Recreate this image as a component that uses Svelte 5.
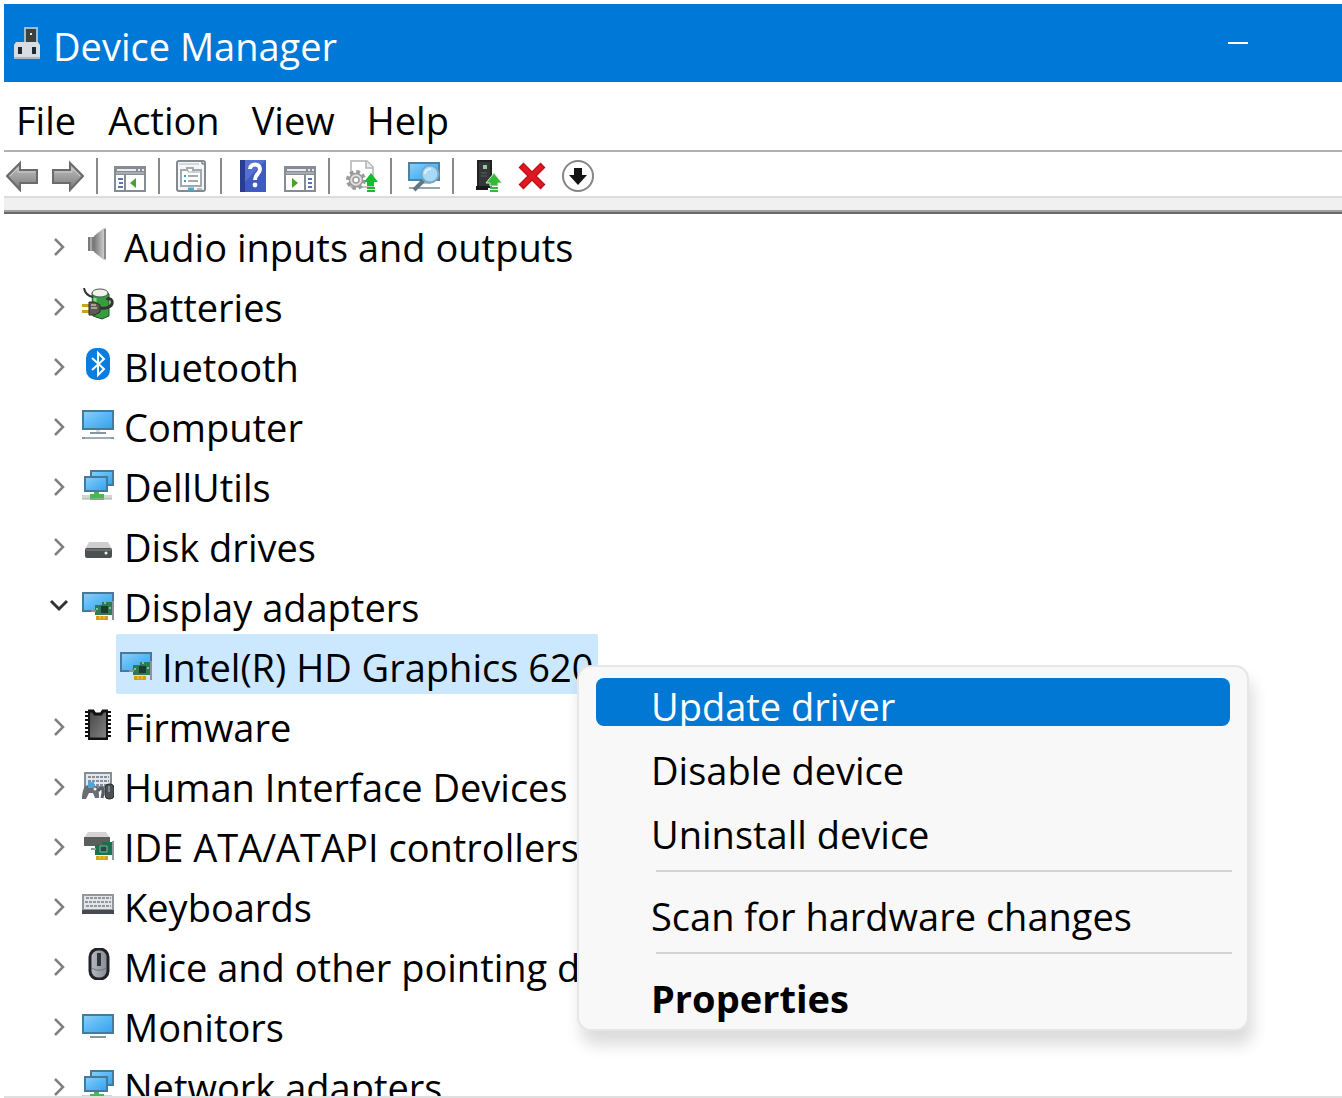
<script lang="ts">
  interface Device {
    label: string;
    icon: string;
    children?: Device[];
  }

  const menus = ["File", "Action", "View", "Help"];

  const tools = [
    { icon: "back", label: "Back" },
    { icon: "forward", label: "Forward" },
    null,
    { icon: "tree-pane", label: "Show/Hide Console Tree" },
    null,
    { icon: "properties", label: "Properties" },
    null,
    { icon: "help", label: "Help" },
    { icon: "action-pane", label: "Show/Hide Action Pane" },
    null,
    { icon: "update", label: "Update driver" },
    null,
    { icon: "scan", label: "Scan for hardware changes" },
    null,
    { icon: "enable", label: "Enable device" },
    { icon: "uninstall", label: "Uninstall device" },
    { icon: "disable", label: "Disable device" },
  ];

  const devices: Device[] = [
    { label: "Audio inputs and outputs", icon: "audio" },
    { label: "Batteries", icon: "battery" },
    { label: "Bluetooth", icon: "bluetooth" },
    { label: "Computer", icon: "computer" },
    { label: "DellUtils", icon: "network" },
    { label: "Disk drives", icon: "disk" },
    {
      label: "Display adapters",
      icon: "display",
      children: [{ label: "Intel(R) HD Graphics 620", icon: "display" }],
    },
    { label: "Firmware", icon: "firmware" },
    { label: "Human Interface Devices", icon: "hid" },
    { label: "IDE ATA/ATAPI controllers", icon: "ide" },
    { label: "Keyboards", icon: "keyboard" },
    { label: "Mice and other pointing devices", icon: "mouse" },
    { label: "Monitors", icon: "monitor" },
    { label: "Network adapters", icon: "network" },
  ];

  const contextMenu = [
    "Update driver",
    "Disable device",
    "Uninstall device",
    null,
    "Scan for hardware changes",
    null,
    "Properties",
  ];

  let expanded: Record<string, boolean> = $state({ "Display adapters": true });
  let active = $state("Update driver");

  function toggle(label: string) {
    expanded[label] = !expanded[label];
  }
</script>

{#snippet icon(name: string)}
  <svg class="icon" viewBox="0 0 32 32" aria-hidden="true">
    {#if name === "back"}
      <path d="M1 16 14 3V10H31V23H14V30Z" fill="url(#arrow)" stroke="#6b6b6b" stroke-width="2" />
      <path d="M4 16 12 8V12H29" fill="none" stroke="#ccc" />
    {:else if name === "forward"}
      <path d="M31 16 18 3V10H1V23H18V30Z" fill="url(#arrow)" stroke="#6b6b6b" stroke-width="2" />
      <path d="M28 16 20 8V12H3" fill="none" stroke="#ccc" />
    {:else if name === "tree-pane" || name === "action-pane"}
      <path d="M1 7H31V31H1Z" fill="#fff" stroke="#868c93" stroke-width="2" />
      <path d="M1 7H31V15H1Z" fill="#868c93" />
      <path d="M3 10H22M24 10H26M28 10H30" stroke="#e8ecef" stroke-width="2" />
      <path d="M2 13H30" stroke="#c9cdd1" stroke-width="1" />
      {#if name === "tree-pane"}
        <path d="M11 15V31" stroke="#868c93" stroke-width="2" />
        <path d="M4 19H9M5 23H9M4 27H9" stroke="#5578ad" stroke-width="2" />
        <path d="M22 18V28L16 23Z" fill="#43a62a" />
      {:else}
        <path d="M21 15V31" stroke="#868c93" stroke-width="2" />
        <path d="M24 19H28M24 23H28M24 27H28" stroke="#5578ad" stroke-width="2" />
        <path d="M8 18V28L14 23Z" fill="#43a62a" />
      {/if}
    {:else if name === "properties"}
      <rect x="1" y="1" width="28" height="30" rx="2" fill="#f5f6f7" stroke="#82898f" stroke-width="2" />
      <path d="M3 4H23" stroke="#d4d8db" stroke-width="2" />
      <path d="M25 3H27V5" fill="none" stroke="#555" stroke-width="1" />
      <path d="M5 10H11V8H17V10H25V26H5Z" fill="#fff" stroke="#a4a9ad" stroke-width="2" />
      <path d="M12 10V12H24M18 9V12" fill="none" stroke="#a4a9ad" />
      <path d="M8 16H10M8 21H10" stroke="#3e9db9" stroke-width="2" />
      <path d="M12 16H22M12 21H22" stroke="#a4a9ad" stroke-width="2" />
      <path d="M12 29H18" stroke="#4aaed0" stroke-width="3" />
      <path d="M21 29H26" stroke="#b8bcc0" stroke-width="2" />
    {:else if name === "help"}
      <path d="M2 0H28V32H2Z" fill="#3f5ac0" />
      <path d="M2 0H7V32H2Z" fill="#2b3d91" />
      <path d="M7 0H28L7 22Z" fill="#6c86dc" opacity=".5" />
      <path d="M12 9C12 3 22 3 22 9C22 14 17 14 17 20" fill="none" stroke="#fff" stroke-width="4" />
      <circle cx="17" cy="25" r="2.4" fill="#fff" />
    {:else if name === "update"}
      <path d="M5 1H21L27 7V27H5Z" fill="#fff" stroke="#b2b2b2" stroke-width="1.5" />
      <path d="M20 1V8H27" fill="#eee" stroke="#b2b2b2" stroke-width="1.5" />
      <circle cx="10" cy="20" r="8" fill="none" stroke="#9a9a9a" stroke-width="4" stroke-dasharray="3.6 2.68" />
      <circle cx="10" cy="20" r="6.5" fill="#e2e2e2" stroke="#9a9a9a" stroke-width="1.5" />
      <circle cx="10" cy="20" r="3" fill="#fff" stroke="#9a9a9a" stroke-width="1.5" />
      <path d="M25 13 32 22H28V26H21V22H18Z" fill="#18bb2b" />
      <path d="M21 28H29M21 31H29" stroke="#18bb2b" stroke-width="2" />
    {:else if name === "scan"}
      <path d="M1 3H31V20H1Z" fill="url(#screen)" stroke="#50809d" stroke-width="2" />
      <path d="M1 28H32" stroke="#9aa4ab" stroke-width="2" />
      <path d="M12 23H23" stroke="#bac3c8" stroke-width="2" />
      <path d="M16 20 6 30" stroke="#607784" stroke-width="4" />
      <circle cx="22" cy="14" r="8.5" fill="#a8d9f7" stroke="#78a8c6" stroke-width="2" />
      <path d="M17 14C17 10 20 9 23 9" fill="none" stroke="#def3ff" stroke-width="2" />
    {:else if name === "enable"}
      <path d="M8 1H21V27H8Z" fill="#343737" stroke="#202222" stroke-width="2" />
      <path d="M13 5H17V9H13Z" fill="#9ac79c" />
      <path d="M6 26H18V30H6Z" fill="#17191a" />
      <path d="M11 13H17M11 16H17" stroke="#5b6060" stroke-width="1" />
      <path d="M24 13 32 23H28V26H20V23H16Z" fill="#35b83b" stroke="#d9efd9" stroke-width="1" />
      <path d="M20 28H28M20 31H28" stroke="#35b83b" stroke-width="2" />
    {:else if name === "uninstall"}
      <path d="M5 5 27 27M27 5 5 27" stroke="#b90d18" stroke-width="7" />
      <path d="M6 6 26 26M26 6 6 26" stroke="#dc1822" stroke-width="5" />
    {:else if name === "disable"}
      <circle cx="16" cy="16" r="15" fill="#fff" stroke="#858585" stroke-width="2" />
      <path d="M12 8H20V15H25L16 25L7 15H12Z" fill="#141414" />
    {:else if name === "audio"}
      <path d="M6 9H12V23H6Z" fill="#7a7a7a" />
      <path d="M8 9H10V23H8Z" fill="#a9a9a9" />
      <path d="M12 8 22 0H24V32H22L12 24Z" fill="url(#cone)" />
      <path d="M23 1V31" stroke="#8a8a8a" stroke-width="2" />
    {:else if name === "battery"}
      <path d="M10 5 20 2 27 6V28L20 31 11 28Z" fill="#369c40" stroke="#234f2a" />
      <ellipse cx="18" cy="5" rx="8" ry="4" fill="#eef3ee" stroke="#555" />
      <path d="M13 10V27" stroke="#8cdb91" stroke-width="3" />
      <path d="M2 0C3 6 6 8 11 9" fill="none" stroke="#333" stroke-width="2" />
      <path d="M18 20C26 21 31 18 30 13C29 10 26 10 25 12" fill="none" stroke="#333" stroke-width="3" />
      <path d="M0 16H8V19H0ZM0 22H8V25H0Z" fill="#c9a417" />
      <path d="M7 14H13L18 17V24L13 27H7Z" fill="#5e5853" stroke="#2b2a29" />
      <path d="M9 17H14M9 20H15" stroke="#aaa29b" stroke-width="2" />
    {:else if name === "bluetooth"}
      <rect x="4" y="0" width="24" height="32" rx="10" fill="#087de0" />
      <path d="M10 10 22 21 16 27V5L22 11 10 22" fill="none" stroke="#fff" stroke-width="2" />
    {:else if name === "computer"}
      <path d="M1 3H31V21H1Z" fill="url(#screen)" stroke="#467a9a" stroke-width="2" />
      <path d="M14 22H18V25H14Z" fill="#d2dce2" />
      <path d="M8 25H24M0 30H32" stroke="#8797a1" stroke-width="2" />
      <path d="M3 30H29" stroke="#b9c3c9" stroke-width="1" />
    {:else if name === "network"}
      <path d="M9 3H31V17H9Z" fill="url(#screen)" stroke="#467a9a" stroke-width="2" />
      <path d="M3 9H25V23H3Z" fill="url(#screen)" stroke="#467a9a" stroke-width="2" />
      <path d="M12 24H17V26H22V32H8V26H12Z" fill="#4db45c" />
      <path d="M0 27H8V31H0ZM22 27H30V31H22Z" fill="#d1d8d3" />
      <path d="M0 31H30" stroke="#a0b4a5" stroke-width="1" />
    {:else if name === "disk"}
      <path d="M7 14H26L30 21H3Z" fill="#cecece" />
      <rect x="3" y="20" width="27" height="10" rx="2" fill="#4d5050" />
      <path d="M4 22H29" stroke="#888b8b" />
      <circle cx="24" cy="25" r="1.5" fill="#e0ffeb" />
    {:else if name === "display"}
      <path d="M1 5H31V23H1Z" fill="url(#screen)" stroke="#467a9a" stroke-width="2" />
      <path d="M13 17H20V14H30V27H13Z" fill="#2f7954" />
      <path d="M9 23H14M31 13V32" stroke="#8b9399" stroke-width="2" />
      <path d="M19 18H26V25H19Z" fill="#1d3931" />
      <path d="M22 15H24M14 21H16M27 20H29" stroke="#82bf91" stroke-width="2" />
      <path d="M14 28H26V32H14Z" fill="#dc9a16" />
      <path d="M18 28V31M22 28V31" stroke="#f7cf67" />
    {:else if name === "firmware"}
      <path d="M5 3V31M27 3V31" stroke="#111" stroke-width="4" stroke-dasharray="2 2" />
      <path d="M7 3H11L13 6H19L21 3H25V31H7Z" fill="url(#chip)" stroke="#111" stroke-width="2" />
      <path d="M6 3H11L13 6H19L21 3H26M6 31H26" fill="none" stroke="#111" stroke-width="3" />
    {:else if name === "hid"}
      <path d="M3 5H29V19H3Z" fill="#e4e7ea" stroke="#858d95" stroke-width="2" />
      <path d="M6 9H27M6 13H27M6 17H27" stroke="#8490a0" stroke-width="2" stroke-dasharray="3 1" />
      <path d="M0 31C0 22 3 15 8 18L13 18C17 17 17 24 17 30H13L11 25H7L4 31Z" fill="#686e74" />
      <path d="M6 14H12V20H6Z" fill="#4aa7e3" />
      <circle cx="13" cy="21" r="1.5" fill="#e8eef2" />
      <path d="M16 23C21 16 22 22 20 30" fill="none" stroke="#555c62" stroke-width="3" />
      <rect x="23" y="16" width="9" height="15" rx="4" fill="#4c5156" stroke="#2b2e31" />
      <path d="M27 18V24" stroke="#b8bec4" stroke-width="1" />
    {:else if name === "ide"}
      <path d="M6 4H24L28 10H2Z" fill="#d4d4d4" />
      <path d="M2 9H28V18H2Z" fill="#5c5e5e" />
      <path d="M13 17H20V14H30V27H13Z" fill="#18724f" />
      <path d="M9 21H14M31 13V32" stroke="#929b9e" stroke-width="2" />
      <path d="M18 18H25V24H18Z" fill="#234d46" stroke="#77bb91" />
      <path d="M14 28H26V32H14Z" fill="#d7a513" />
      <path d="M18 28V31M22 28V31" stroke="#f1cc59" />
    {:else if name === "keyboard"}
      <path d="M1 7H31V22H1Z" fill="#e3e5e8" stroke="#92979d" stroke-width="2" />
      <path d="M4 10H29M3 14H29M4 18H29" stroke="#93989e" stroke-width="2" stroke-dasharray="3 1" />
      <path d="M0 22H32V26H0Z" fill="#474b50" />
    {:else if name === "mouse"}
      <rect x="8" y="1" width="18" height="30" rx="8" fill="url(#mouse)" stroke="#202226" stroke-width="3" />
      <path d="M10 20C14 23 20 23 24 20" fill="none" stroke="#6c7077" />
      <path d="M17 5V18" stroke="#30333a" stroke-width="4" />
    {:else if name === "monitor"}
      <path d="M1 7H31V25H1Z" fill="url(#screen)" stroke="#467a9a" stroke-width="2" />
      <path d="M8 29H24" stroke="#8797a1" stroke-width="2" />
    {/if}
  </svg>
{/snippet}

{#snippet chevron(open: boolean)}
  <svg class="icon" viewBox="0 0 32 32" fill="none" aria-hidden="true">
    {#if open}
      <path d="M7 13 15 21 23 13" stroke="#333" stroke-width="3" />
    {:else}
      <path d="M11 11 19 19 11 27" stroke="#808080" stroke-width="2.5" />
    {/if}
  </svg>
{/snippet}

<svg class="defs" aria-hidden="true">
  <defs>
    <linearGradient id="screen" x1="0" y1="0" x2="1" y2="1">
      <stop offset="0" stop-color="#8cd0f8" />
      <stop offset=".5" stop-color="#5ab8f5" />
      <stop offset="1" stop-color="#36a0ec" />
    </linearGradient>
    <linearGradient id="arrow" x1="0" y1="0" x2="0" y2="1">
      <stop offset="0" stop-color="#c4c4c4" />
      <stop offset=".5" stop-color="#a0a0a0" />
      <stop offset="1" stop-color="#777" />
    </linearGradient>
    <linearGradient id="cone">
      <stop offset="0" stop-color="#777" />
      <stop offset="1" stop-color="#ddd" />
    </linearGradient>
    <linearGradient id="chip" x1="0" y1="0" x2="1" y2="1">
      <stop offset="0" stop-color="#454545" />
      <stop offset="1" stop-color="#858585" />
    </linearGradient>
    <linearGradient id="mouse">
      <stop offset="0" stop-color="#b7bbc2" />
      <stop offset="1" stop-color="#858a93" />
    </linearGradient>
  </defs>
</svg>

<div class="window">
  <header class="titlebar">
    <svg class="logo" viewBox="0 0 26 32" aria-hidden="true">
      <path d="M11 1H23V17H11Z" fill="#3b4240" stroke="#a8bac4" stroke-width="2" />
      <path d="M16 6H18V8H16Z" fill="#e5ede9" />
      <path d="M2 15H24L26 18V32H0V18Z" fill="#d8dde4" />
      <path d="M0 30H26V32H0Z" fill="#a8b9cb" />
      <path d="M4 20H8V27H4ZM18 20H22V27H18Z" fill="#202a36" />
    </svg>
    <h1>Device Manager</h1>
    <button class="minimize" aria-label="Minimize"><span></span></button>
  </header>

  <nav class="menubar">
    {#each menus as menu}
      <button>{menu}</button>
    {/each}
  </nav>

  <div class="toolbar">
    {#each tools as tool}
      {#if tool}
        <button aria-label={tool.label}>{@render icon(tool.icon)}</button>
      {:else}
        <span class="divider"></span>
      {/if}
    {/each}
  </div>
  <div class="band"></div>

  <main>
    <ul class="tree">
      {#each devices as device}
        <li>
          <button class="row" onclick={() => toggle(device.label)}>
            {@render chevron(!!expanded[device.label])}
            {@render icon(device.icon)}
            <span class="label">{device.label}</span>
          </button>
          {#if device.children && expanded[device.label]}
            <ul class="children">
              {#each device.children as child}
                <li>
                  <button class="row selected">
                    {@render icon(child.icon)}
                    <span class="label">{child.label}</span>
                  </button>
                  <div class="context" role="menu">
                    {#each contextMenu as item}
                      {#if item}
                        <button
                          role="menuitem"
                          class:active={item === active}
                          class:default={item === "Properties"}
                          onmouseenter={() => (active = item)}>{item}</button
                        >
                      {:else}
                        <hr />
                      {/if}
                    {/each}
                  </div>
                </li>
              {/each}
            </ul>
          {/if}
        </li>
      {/each}
    </ul>
  </main>
</div>

<style>
  :global(body) {
    margin: 0;
    background: #fff;
  }

  .window {
    box-sizing: border-box;
    display: flex;
    flex-direction: column;
    height: 100vh;
    padding: 4px 0 0 4px;
    overflow: hidden;
    font-family: "Open Sans", "Segoe UI", sans-serif;
    font-size: 38px;
    color: #000;
  }

  .defs {
    position: absolute;
    width: 0;
    height: 0;
  }

  button {
    margin: 0;
    padding: 0;
    border: 0;
    background: none;
    font: inherit;
    color: inherit;
    text-align: left;
    white-space: nowrap;
  }

  .icon {
    display: block;
    flex: none;
    width: 32px;
    height: 32px;
  }

  .titlebar {
    display: flex;
    flex: none;
    align-items: center;
    height: 78px;
    padding: 0 58px 0 10px;
    background: #0078d7;
    color: #fff;
  }

  .logo {
    width: 26px;
    height: 32px;
  }

  h1 {
    flex: 1;
    margin: 0;
    padding: 6px 0 0 13px;
    font-size: inherit;
    font-weight: 400;
    line-height: 78px;
  }

  .minimize {
    display: flex;
    align-items: center;
    justify-content: center;
    width: 92px;
    height: 78px;
  }

  .minimize span {
    width: 20px;
    height: 2px;
    background: #fff;
  }

  .menubar {
    display: flex;
    flex: none;
    gap: 32px;
    height: 68px;
    padding-left: 12px;
    border-bottom: 2px solid #b0b0b0;
  }

  .menubar button {
    line-height: 76px;
  }

  .toolbar {
    display: flex;
    flex: none;
    align-items: center;
    gap: 14px;
    height: 40px;
    padding: 4px 0 0 2px;
  }

  .divider {
    width: 2px;
    height: 36px;
    margin: 0 2px 0 -2px;
    background: #888;
  }

  .band {
    flex: none;
    height: 12px;
    border-top: 2px solid #dcdcdc;
    border-bottom: 2px solid #a0a0a0;
    background: #f0f0f0;
    box-shadow: 0 2px #696969;
  }

  main {
    flex: 1;
    min-height: 0;
    margin-top: 2px;
    overflow: hidden;
    border-bottom: 2px solid #dfdfdf;
  }

  ul {
    margin: 0;
    padding: 0;
    list-style: none;
  }

  .tree {
    padding-left: 40px;
  }

  .row {
    display: flex;
    align-items: center;
    height: 60px;
  }

  .row .icon + .icon {
    margin-left: 6px;
  }

  .label {
    padding: 6px 0 0 10px;
    line-height: 56px;
  }

  .children {
    padding-left: 72px;
  }

  .children li {
    position: relative;
  }

  .selected {
    padding: 0 5px 0 4px;
    border-radius: 2px;
    background: #cce8ff;
  }

  .context {
    position: absolute;
    top: 31px;
    left: 461px;
    z-index: 1;
    box-sizing: border-box;
    display: flex;
    flex-direction: column;
    gap: 16px;
    width: 672px;
    padding: 11px 17px;
    border: 2px solid #e6e6e6;
    border-radius: 14px;
    background: #f8f8f8;
    box-shadow: 4px 14px 16px rgba(0, 0, 0, 0.14);
  }

  .context button {
    height: 48px;
    padding: 4px 0 0 55px;
    border-radius: 8px;
    line-height: 48px;
  }

  .context .active {
    background: #0078d4;
    color: #fff;
  }

  .context .default {
    font-weight: 700;
  }

  hr {
    width: 576px;
    height: 2px;
    margin: 0 0 0 60px;
    border: 0;
    background: #d3d3d3;
  }
</style>
